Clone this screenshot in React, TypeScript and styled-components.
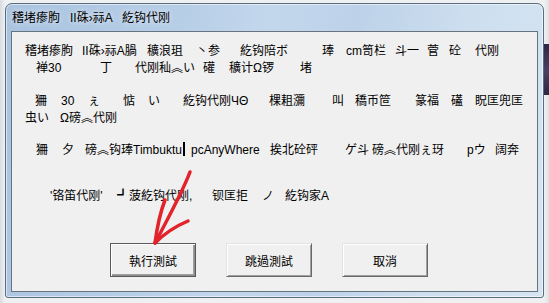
import React from 'react'
import styled, { createGlobalStyle } from 'styled-components'

const CLIENT_LEFT = 12

const GlobalStyle = createGlobalStyle`
  html, body {
    margin: 0;
    padding: 0;
  }
  body {
    width: 549px;
    height: 303px;
    overflow: hidden;
    background:
      linear-gradient(to bottom, transparent 44px, #2c2742 44px, #4a4063 70px, #2c2742 95px, transparent 95px) right top / 5px 100% no-repeat,
      linear-gradient(to right, #d9dcdf 0, #eef0f2 5px, #eef0f2 calc(100% - 5px), #dfe2e5 100%);
    font-family: 'Liberation Sans', 'Noto Sans CJK SC', sans-serif;
  }
`

const Root = styled.div`
  position: relative;
  width: 549px;
  height: 303px;
  padding-top: 3px;
  box-sizing: border-box;
`

const Window = styled.div`
  width: 539px;
  height: 295px;
  margin-left: 5px;
  box-sizing: border-box;
  border: 1px solid #5c6c7f;
  border-radius: 7px 7px 3px 3px;
  padding: 0 5px 5px 5px;
  display: flex;
  flex-direction: column;
  background: linear-gradient(100deg, #a9c3df 0%, #b7cee7 30%, #c3d7ec 45%, #bdd2e9 60%, #cddfef 80%, #d6e4f2 100%);
  box-shadow: inset 0 0 0 1px rgba(255, 255, 255, 0.55);
`

const TitleBar = styled.div`
  height: 27px;
  display: flex;
  align-items: center;
  padding: 0 0 2px 1px;
  box-sizing: border-box;
  font-size: 12px;
  color: #000;
  white-space: pre;
  text-shadow: 0 0 6px rgba(255, 255, 255, 0.9);
`

const Client = styled.div`
  flex: 1;
  background: #f0f0f0;
  border: 1px solid #67737f;
  padding-top: 11px;
  box-sizing: border-box;
`

const Paragraph = styled.div<{ $mt: number }>`
  margin-top: ${(p) => p.$mt}px;
`

const Line = styled.div<{ $indent: number }>`
  display: flex;
  height: 17px;
  line-height: 17px;
  padding-left: ${(p) => p.$indent}px;
  font-size: 12px;
  color: #000;
`

const Seg = styled.span<{ $w?: number }>`
  flex: none;
  white-space: pre;
  width: ${(p) => (p.$w ? `${p.$w}px` : 'auto')};
`

const Caret = styled.span`
  display: inline-block;
  width: 2px;
  height: 14px;
  background: #000;
  vertical-align: -2px;
  margin: 0 5px 0 1px;
`

const ButtonRow = styled.div`
  display: flex;
  gap: 30px;
  margin-top: 38px;
  padding-left: ${110 - CLIENT_LEFT}px;
`

const DialogButton = styled.button<{ $default?: boolean }>`
  width: 86px;
  height: 34px;
  padding: 0;
  background: #f0f0f0;
  font-family: 'Liberation Sans', 'Noto Sans CJK TC', sans-serif;
  font-size: 12px;
  color: #000;
  box-sizing: border-box;
  border-style: solid;
  border-width: 1px;
  border-color: ${(p) => (p.$default ? '#5a5a5a' : '#e3e3e3 #696969 #696969 #e3e3e3')};
  box-shadow: ${(p) =>
    p.$default
      ? 'inset 1px 1px 0 #ffffff, inset -1px -1px 0 #8c8c8c, inset -2px -2px 0 #a0a0a0'
      : 'inset 1px 1px 0 #ffffff, inset -1px -1px 0 #a0a0a0'};
`

const Scribble = styled.svg`
  position: absolute;
  left: 0;
  top: 0;
  width: 549px;
  height: 303px;
  pointer-events: none;
`

type Item = [string, number]

const paragraphs: { mt: number; lines: Item[][] }[] = [
  {
    mt: 0,
    lines: [
      [
        ['稽堵瘆朐', 25],
        ['II硃›祘A腡', 82],
        ['穬浪珇', 147],
        ['丶参', 196],
        ['紇钩陪ボ', 240],
        ['琫', 322],
        ['cm笥栏', 346],
        ['斗一', 395],
        ['菅', 427],
        ['砼', 449],
        ['代刚', 475],
      ],
      [
        ['褝30', 36],
        ['丁', 100],
        ['代刚秈︽い', 135],
        ['礶', 203],
        ['穬计Ω锣', 229],
        ['堵', 300],
      ],
    ],
  },
  {
    mt: 16,
    lines: [
      [
        ['狦', 35],
        ['30', 61],
        ['ぇ', 88],
        ['惦', 123],
        ['い', 148],
        ['紇钩代刚ЧΘ', 183],
        ['棵耝瀰', 269],
        ['叫', 332],
        ['穚币笸', 355],
        ['篆福', 415],
        ['礚', 451],
        ['眖匡兜匡', 475],
      ],
      [
        ['虫い', 25],
        ['Ω磅︽代刚', 60],
      ],
    ],
  },
  {
    mt: 15,
    lines: [
      [
        ['狦', 36],
        ['夕', 62],
        ['磅︽钩琫Timbuktu|', 85],
        ['pcAnyWhere', 191],
        ['挨北砼砰', 270],
        ['ゲ斗', 345],
        ['磅︽代刚ぇ玡', 372],
        ['pウ', 467],
        ['阔奔', 495],
      ],
    ],
  },
  {
    mt: 29,
    lines: [
      [
        ["'铬笛代刚'", 50],
        ['┛菠紇钩代刚,', 117],
        ['钡匡拒', 212],
        ['ノ', 262],
        ['紇钩家A', 285],
      ],
    ],
  },
]

function renderText(text: string) {
  if (!text.endsWith('|')) return text
  return (
    <>
      {text.slice(0, -1)}
      <Caret />
    </>
  )
}

const TextLine: React.FC<{ items: Item[] }> = ({ items }) => (
  <Line $indent={items[0][1] - CLIENT_LEFT}>
    {items.map(([text, x], i) => (
      <Seg key={i} $w={i < items.length - 1 ? items[i + 1][1] - x : undefined}>
        {renderText(text)}
      </Seg>
    ))}
  </Line>
)

export default function App() {
  return (
    <Root>
      <GlobalStyle />
      <Window>
        <TitleBar>{'稽堵瘆朐   II硃›祘A   紇钩代刚'}</TitleBar>
        <Client>
          {paragraphs.map((p, i) => (
            <Paragraph key={i} $mt={p.mt}>
              {p.lines.map((l, j) => (
                <TextLine key={j} items={l} />
              ))}
            </Paragraph>
          ))}
          <ButtonRow>
            <DialogButton $default>執行測試</DialogButton>
            <DialogButton>跳過測試</DialogButton>
            <DialogButton>取消</DialogButton>
          </ButtonRow>
        </Client>
      </Window>
      <Scribble viewBox="0 0 549 303">
        <g fill="none" stroke="#e2232b" strokeWidth="3.5" strokeLinecap="round" strokeLinejoin="round">
          <path d="M190 172 C 184 188, 170 215, 155 243" />
          <path d="M155 243 C 157 228, 160 213, 165 200" />
          <path d="M155 243 C 164 234, 176 226, 188 221" />
        </g>
      </Scribble>
    </Root>
  )
}
